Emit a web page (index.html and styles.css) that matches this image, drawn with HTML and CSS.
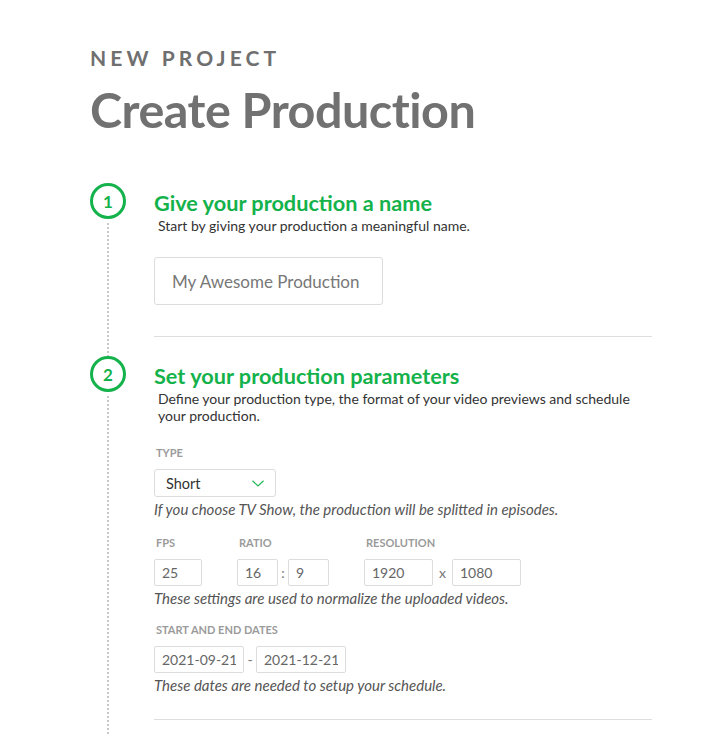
FILE: index.html
```html
<!DOCTYPE html>
<html lang="en">
<head>
<meta charset="utf-8">
<title>Create Production</title>
<link rel="stylesheet" href="styles.css">
</head>
<body>
<div class="page">
  <header class="page-head">
    <div class="eyebrow">NEW PROJECT</div>
    <h1 class="title">Create Production</h1>
  </header>

  <section class="step">
    <div class="rail"><div class="num">1</div><div class="dots"></div></div>
    <div class="step-body">
      <h2 class="step-title">Give your production a name</h2>
      <p class="step-desc">Start by giving your production a meaningful name.</p>
      <input class="name-input" type="text" placeholder="My Awesome Production">
      <hr class="sep sep-1">
    </div>
  </section>

  <section class="step">
    <div class="rail"><div class="num">2</div><div class="dots"></div></div>
    <div class="step-body">
      <h2 class="step-title">Set your production parameters</h2>
      <p class="step-desc">Define your production type, the format of your video previews and schedule your production.</p>

      <div class="field field-first">
        <div class="label">Type</div>
        <div class="select">
          <span>Short</span>
          <svg class="chev" width="12" height="7" viewBox="0 0 12 7"><polyline points="0.5,0.8 6,6 11.5,0.8" fill="none" stroke="#1fb556" stroke-width="1.2"/></svg>
        </div>
        <p class="help">If you choose TV Show, the production will be splitted in episodes.</p>
      </div>

      <div class="field">
        <div class="field-row">
          <div class="sub">
            <div class="label">Fps</div>
            <div class="inline"><input class="box w-fps" type="text" value="25"></div>
          </div>
          <div class="sub">
            <div class="label">Ratio</div>
            <div class="inline"><input class="box w-ratio" type="text" value="16"><span class="joint colon">:</span><input class="box w-ratio" type="text" value="9"></div>
          </div>
          <div class="sub">
            <div class="label">Resolution</div>
            <div class="inline"><input class="box w-res" type="text" value="1920"><span class="joint times">x</span><input class="box w-res" type="text" value="1080"></div>
          </div>
        </div>
        <p class="help">These settings are used to normalize the uploaded videos.</p>
      </div>

      <div class="field field-dates">
        <div class="label">Start and end dates</div>
        <div class="inline"><input class="box w-date" type="text" value="2021-09-21"><span class="joint dash">-</span><input class="box w-date" type="text" value="2021-12-21"></div>
        <p class="help">These dates are needed to setup your schedule.</p>
      </div>

      <hr class="sep sep-2">
    </div>
  </section>
</div>
</body>
</html>
```

FILE: styles.css
```css
* { box-sizing: border-box; }
html, body { margin: 0; padding: 0; background: #fff; }
body { font-family: Lato, "Open Sans", sans-serif; color: #333; overflow: hidden; }

.page { padding: 45px 58px 0 90px; }

.eyebrow {
  font-size: 21px;
  line-height: 25px;
  font-weight: 700;
  letter-spacing: 4.1px;
  color: #6f6f6f;
}
.title {
  margin: 9px 0 0;
  font-size: 48.5px;
  line-height: 60px;
  font-weight: 700;
  color: #717171;
  letter-spacing: -0.5px;
}
.page-head { margin-bottom: 44px; }

.step { display: flex; gap: 28px; }
.rail { width: 36px; flex: none; display: flex; flex-direction: column; align-items: center; }
.num {
  width: 36px; height: 36px; flex: none;
  border: 3px solid #14b24b;
  border-radius: 50%;
  display: flex; align-items: center; justify-content: center;
  font-size: 17px; font-weight: 700; color: #14b24b;
}
.dots {
  flex: 1;
  width: 2px;
  margin-top: 4px;
  margin-left: -1px;
  background-image: linear-gradient(#c9c9c9 50%, transparent 50%);
  background-size: 2px 4px;
}
.step-body { flex: 1; padding-top: 7px; }

.step-title {
  margin: 0;
  font-size: 21.7px;
  line-height: 26px;
  font-weight: 700;
  color: #14b24b;
}
.step-desc {
  margin: 1px 0 0;
  padding-left: 4px;
  font-size: 14px;
  line-height: 17px;
  color: #333;
  max-width: 480px;
}

.name-input {
  display: block;
  margin-top: 23px;
  width: 229px; height: 48px;
  padding: 0 17px;
  border: 1px solid #dcdcdc;
  border-radius: 3px;
  font-family: inherit;
  font-size: 17px;
  color: #555;
  outline: none;
}
.name-input::placeholder { color: #777; }

.sep { border: 0; border-top: 1px solid #dedede; margin: 0; height: 0; }
.sep-1 { margin-top: 31px; margin-bottom: 19px; }
.sep-2 { margin-top: 25px; margin-bottom: 20px; }

.field { margin-top: 18px; }
.field-first { margin-top: 22px; }
.field-dates { margin-top: 16px; }

.label {
  font-size: 11px;
  line-height: 14px;
  font-weight: 700;
  text-transform: uppercase;
  color: #9b9b9b;
  padding-left: 2px;
  margin-bottom: 9px;
}

.select {
  width: 122px; height: 28px;
  border: 1px solid #dcdcdc;
  border-radius: 3px;
  display: flex; align-items: center; justify-content: space-between;
  padding: 0 11px 0 11px;
  font-size: 14.5px;
  color: #333;
}
.chev { margin-top: 1px; }

.help {
  margin: 4px 0 0;
  font-size: 15px;
  line-height: 17px;
  font-style: italic;
  color: #555;
}

.field-row { display: flex; gap: 35px; }
.inline { display: flex; align-items: center; }

.box {
  height: 27px;
  border: 1px solid #dcdcdc;
  border-radius: 2px;
  padding: 0 7px;
  font-family: inherit;
  font-size: 14px;
  color: #666;
  outline: none;
  background: #fff;
}
.w-fps { width: 48px; }
.w-ratio { width: 41px; }
.w-res { width: 69px; }
.w-date { width: 90px; }

.joint { font-size: 14px; color: #777; text-align: center; }
.colon { width: 10px; }
.times { width: 19px; }
.dash { width: 12px; }
```
